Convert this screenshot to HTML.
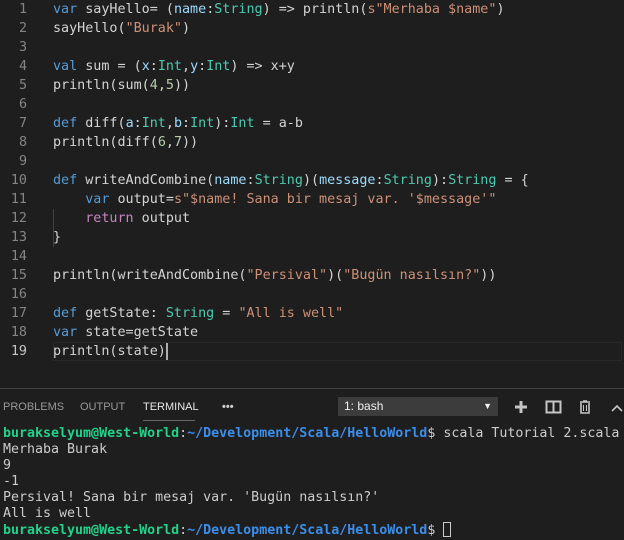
<!DOCTYPE html>
<html><head><meta charset="utf-8"><style>
*{margin:0;padding:0;box-sizing:border-box}
body{width:624px;height:540px;background:#1e1e1e;overflow:hidden;position:relative;font-family:"DejaVu Sans Mono","Liberation Mono",monospace;}
.l{position:absolute;left:53px;height:19px;line-height:19px;font-size:13.4px;color:#d4d4d4;white-space:pre}
.n{position:absolute;left:0;width:27px;text-align:right;height:19px;line-height:19px;font-size:13.4px;color:#858585}
.k{color:#569cd6}.t{color:#4ec9b0}.s{color:#ce9178}.p{color:#9cdcfe}.r{color:#c586c0}.num{color:#b5cea8}
.cur{position:absolute;left:53px;top:342px;width:569px;height:19px;border:1px solid #282828}
.term{position:absolute;left:3px;font-size:13.3px;line-height:16px;color:#cccccc;white-space:pre}
.g{color:#23d18b;font-weight:bold}.b{color:#3b8eea;font-weight:bold}
.tab{position:absolute;top:401px;font-family:"Liberation Sans",sans-serif;font-size:11px;color:#999;}
</style></head><body>
<div class="cur"></div>
<div style="position:absolute;left:53px;top:209px;width:1px;height:38px;background:#404040"></div>
<div class="n" style="top:0">1</div><div class="l" style="top:0"><span class="k">var</span> sayHello= (<span class="p">name</span>:<span class="t">String</span>) =&gt; println(<span class="s">s"Merhaba $name"</span>)</div>
<div class="n" style="top:19px">2</div><div class="l" style="top:19px">sayHello(<span class="s">"Burak"</span>)</div>
<div class="n" style="top:38px">3</div>
<div class="n" style="top:57px">4</div><div class="l" style="top:57px"><span class="k">val</span> sum = (<span class="p">x</span>:<span class="t">Int</span>,<span class="p">y</span>:<span class="t">Int</span>) =&gt; x+y</div>
<div class="n" style="top:76px">5</div><div class="l" style="top:76px">println(sum(<span class="num">4</span>,<span class="num">5</span>))</div>
<div class="n" style="top:95px">6</div>
<div class="n" style="top:114px">7</div><div class="l" style="top:114px"><span class="k">def</span> diff(<span class="p">a</span>:<span class="t">Int</span>,<span class="p">b</span>:<span class="t">Int</span>):<span class="t">Int</span> = a-b</div>
<div class="n" style="top:133px">8</div><div class="l" style="top:133px">println(diff(<span class="num">6</span>,<span class="num">7</span>))</div>
<div class="n" style="top:152px">9</div>
<div class="n" style="top:171px">10</div><div class="l" style="top:171px"><span class="k">def</span> writeAndCombine(<span class="p">name</span>:<span class="t">String</span>)(<span class="p">message</span>:<span class="t">String</span>):<span class="t">String</span> = {</div>
<div class="n" style="top:190px">11</div><div class="l" style="top:190px">    <span class="k">var</span> output=<span class="s">s"$name! Sana bir mesaj var. '$message'"</span></div>
<div class="n" style="top:209px">12</div><div class="l" style="top:209px">    <span class="r">return</span> output</div>
<div class="n" style="top:228px">13</div><div class="l" style="top:228px">}</div>
<div class="n" style="top:247px">14</div>
<div class="n" style="top:266px">15</div><div class="l" style="top:266px">println(writeAndCombine(<span class="s">"Persival"</span>)(<span class="s">"Bugün nasılsın?"</span>))</div>
<div class="n" style="top:285px">16</div>
<div class="n" style="top:304px">17</div><div class="l" style="top:304px"><span class="k">def</span> getState: <span class="t">String</span> = <span class="s">"All is well"</span></div>
<div class="n" style="top:323px">18</div><div class="l" style="top:323px"><span class="k">var</span> state=getState</div>
<div class="n" style="top:342px;color:#c6c6c6">19</div><div class="l" style="top:342px">println(state)<span style="display:inline-block;width:2px;height:17px;background:#aeafad;vertical-align:middle"></span></div>
<div style="position:absolute;left:0;top:388px;width:624px;height:1px;background:#414141"></div>
<div class="tab" style="left:3px">PROBLEMS</div>
<div class="tab" style="left:80px">OUTPUT</div>
<div class="tab" style="left:143px;color:#e7e7e7">TERMINAL</div>
<div style="position:absolute;left:143px;top:420px;width:52px;height:1px;background:#666"></div>
<div class="tab" style="left:222px;color:#ccc;font-weight:bold">•••</div>
<div style="position:absolute;left:338px;top:397px;width:160px;height:19px;background:#3c3c3c;font-family:'Liberation Sans',sans-serif;font-size:12px;color:#f0f0f0;line-height:19px;padding-left:6px">1: bash<span style="position:absolute;right:6px;font-size:9px">▼</span></div>
<svg style="position:absolute;left:510px;top:398px" width="114" height="18" viewBox="0 0 114 18">
<path d="M11 3v12M5 9h12" stroke="#c5c5c5" stroke-width="3"/>
<rect x="36.5" y="3.5" width="14" height="11" fill="none" stroke="#c5c5c5" stroke-width="2"/><path d="M43.5 3v12" stroke="#c5c5c5" stroke-width="2"/>
<path d="M70 4h10M73 3h4M71 5v10h8V5" fill="none" stroke="#c5c5c5" stroke-width="1.6"/><path d="M73.5 7v6M76.5 7v6" stroke="#c5c5c5"/>
<path d="M102 13l5-5 5 5" fill="none" stroke="#c5c5c5" stroke-width="1.6"/>
</svg>
<div class="term" style="top:426px"><span class="g">burakselyum@West-World</span>:<span class="b">~/Development/Scala/HelloWorld</span>$ scala Tutorial 2.scala
Merhaba Burak
9
-1
Persival! Sana bir mesaj var. 'Bugün nasılsın?'
All is well
<span class="g">burakselyum@West-World</span>:<span class="b">~/Development/Scala/HelloWorld</span>$ <span style="display:inline-block;width:8px;height:15px;border:1px solid #ccc;vertical-align:-3px"></span></div>
</body></html>
